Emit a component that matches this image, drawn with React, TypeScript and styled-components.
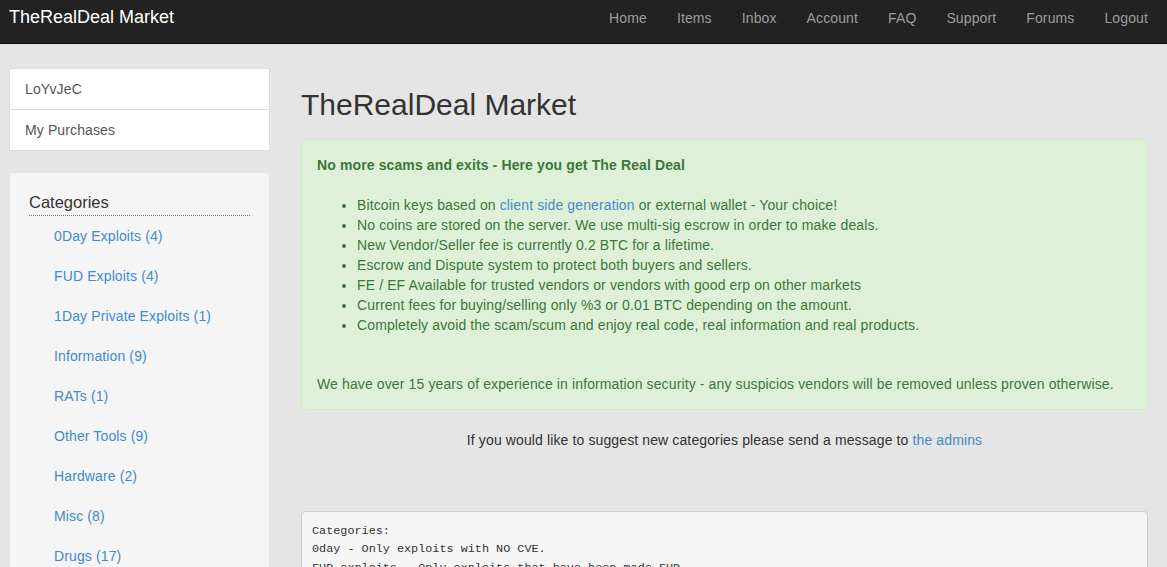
import styled, { createGlobalStyle } from 'styled-components';

const GlobalStyle = createGlobalStyle`
  html, body {
    margin: 0;
    padding: 0;
    background: #e5e5e5;
    font-family: "Liberation Sans", Arial, sans-serif;
    font-size: 14px;
    line-height: 20px;
    letter-spacing: 0.12px;
    color: #333;
  }
  a {
    color: #428bca;
    text-decoration: none;
  }
`;

const categories = [
  { name: '0Day Exploits', count: 4 },
  { name: 'FUD Exploits', count: 4 },
  { name: '1Day Private Exploits', count: 1 },
  { name: 'Information', count: 9 },
  { name: 'RATs', count: 1 },
  { name: 'Other Tools', count: 9 },
  { name: 'Hardware', count: 2 },
  { name: 'Misc', count: 8 },
  { name: 'Drugs', count: 17 },
  { name: 'Weapons', count: 3 },
];

const navLinks = ['Home', 'Items', 'Inbox', 'Account', 'FAQ', 'Support', 'Forums', 'Logout'];

const features = [
  <>
    Bitcoin keys based on <a href="#">client side generation</a> or external wallet - Your choice!
  </>,
  'No coins are stored on the server. We use multi-sig escrow in order to make deals.',
  'New Vendor/Seller fee is currently 0.2 BTC for a lifetime.',
  'Escrow and Dispute system to protect both buyers and sellers.',
  'FE / EF Available for trusted vendors or vendors with good erp on other markets',
  'Current fees for buying/selling only %3 or 0.01 BTC depending on the amount.',
  'Completely avoid the scam/scum and enjoy real code, real information and real products.',
];

const rules = `Categories:
0day - Only exploits with NO CVE.
FUD exploits - Only exploits that have been made FUD.
1day - Private exploits with a CVE but no public code.
Information - Guides, tutorials and private information.`;

const Navbar = styled.nav`
  height: 43px;
  background: #222;
  border-bottom: 1px solid #080808;
  display: flex;
  justify-content: space-between;
  align-items: flex-start;
  padding: 0 4px 0 9px;
`;

const Brand = styled.a`
  && {
    color: #fff;
  }
  font-size: 18px;
  line-height: 20px;
  letter-spacing: 0;
  padding-top: 7px;
`;

const NavList = styled.ul`
  display: flex;
  list-style: none;
  margin: 0;
  padding: 0;
`;

const NavLink = styled.a`
  && {
    color: #9d9d9d;
  }
  display: block;
  padding: 8px 15px;
`;

const Layout = styled.div`
  display: flex;
  align-items: flex-start;
  padding: 0 19px 0 9px;
`;

const Sidebar = styled.aside`
  flex: 0 0 261px;
  padding-top: 24px;
`;

const ListGroup = styled.div`
  margin-bottom: 21px;
`;

const ListItem = styled.a`
  && {
    color: #555;
  }
  display: block;
  background: #fff;
  border: 1px solid #ddd;
  padding: 10px 15px;
  & + & {
    margin-top: -1px;
  }
`;

const Well = styled.div`
  background: #f5f5f5;
  border: 1px solid #e3e3e3;
  border-radius: 4px;
  padding: 19px;
  min-height: 400px;
`;

const WellTitle = styled.h4`
  margin: 0;
  font-size: 16.5px;
  font-weight: normal;
  line-height: 20px;
  letter-spacing: 0;
  padding-bottom: 3px;
  border-bottom: 1px dotted #777;
  color: #333;
`;

const CategoryList = styled.ul`
  list-style: none;
  margin: 0;
  padding: 0 0 0 25px;
`;

const CategoryItem = styled.li`
  padding: 10px 0;
`;

const Main = styled.main`
  flex: 1;
  margin-left: 31px;
  padding-top: 44px;
`;

const Title = styled.h1`
  margin: 0 0 18px;
  font-size: 30px;
  font-weight: 500;
  line-height: 33px;
  letter-spacing: 0;
  color: #333;
`;

const Alert = styled.div`
  background: #dff0d8;
  border: 1px solid #d6e9c6;
  border-radius: 4px;
  color: #3c763d;
  padding: 15px;
`;

const AlertTitle = styled.div`
  font-weight: bold;
  margin-bottom: 20px;
`;

const FeatureList = styled.ul`
  margin: 0 0 39px;
  padding-left: 40px;
`;

const Notice = styled.p`
  margin: 20px 0 61px;
  text-align: center;
`;

const Pre = styled.pre`
  margin: 0;
  background: #f5f5f5;
  border: 1px solid #ccc;
  border-radius: 4px;
  padding: 9.5px 10px;
  font-family: "Liberation Mono", "DejaVu Sans Mono", monospace;
  font-size: 11.8px;
  line-height: 18.5px;
  letter-spacing: 0;
  color: #333;
  white-space: pre-wrap;
`;

export default function App() {
  return (
    <>
      <GlobalStyle />
      <Navbar>
        <Brand href="#">TheRealDeal Market</Brand>
        <NavList>
          {navLinks.map((label) => (
            <li key={label}>
              <NavLink href="#">{label}</NavLink>
            </li>
          ))}
        </NavList>
      </Navbar>
      <Layout>
        <Sidebar>
          <ListGroup>
            <ListItem href="#">LoYvJeC</ListItem>
            <ListItem href="#">My Purchases</ListItem>
          </ListGroup>
          <Well>
            <WellTitle>Categories</WellTitle>
            <CategoryList>
              {categories.map((c) => (
                <CategoryItem key={c.name}>
                  <a href="#">
                    {c.name} ({c.count})
                  </a>
                </CategoryItem>
              ))}
            </CategoryList>
          </Well>
        </Sidebar>
        <Main>
          <Title>TheRealDeal Market</Title>
          <Alert>
            <AlertTitle>No more scams and exits - Here you get The Real Deal</AlertTitle>
            <FeatureList>
              {features.map((f, i) => (
                <li key={i}>{f}</li>
              ))}
            </FeatureList>
            We have over 15 years of experience in information security - any suspicios vendors will be
            removed unless proven otherwise.
          </Alert>
          <Notice>
            If you would like to suggest new categories please send a message to <a href="#">the admins</a>
          </Notice>
          <Pre>{rules}</Pre>
        </Main>
      </Layout>
    </>
  );
}
